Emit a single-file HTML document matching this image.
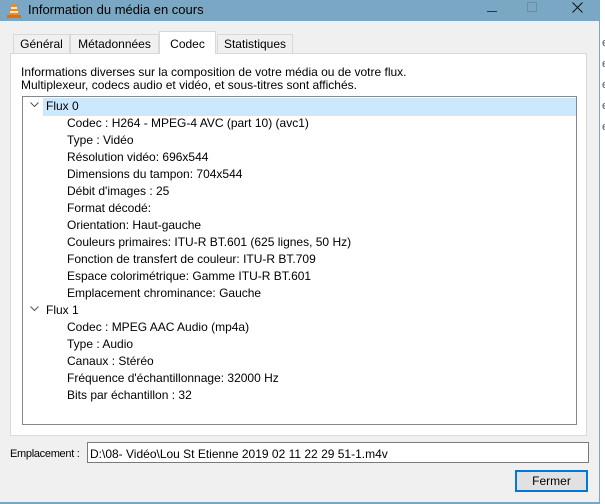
<!DOCTYPE html>
<html><head><meta charset="utf-8"><style>
*{margin:0;padding:0;box-sizing:border-box}
body{width:605px;height:504px;background:#fff;font-family:"Liberation Sans",sans-serif;font-size:12px;color:#000;position:relative;overflow:hidden}
.win{position:absolute;left:0;top:0;width:600px;height:504px;background:#f0f0f0;border-right:1px solid #7aa6c2;border-bottom:2px solid #7aa6c2}
.title{position:absolute;left:0;top:0;width:600px;height:21px;background:#7aa7c3}
.title span{position:absolute;left:28px;top:2px;font-size:13px;color:#000}
.ab{position:absolute;font-size:12px;white-space:nowrap}
.tab{position:absolute;top:34px;height:20px;border:1px solid #d9d9d9;border-bottom:none;background:#f0f0f0;text-align:center;line-height:18px}
.panel{position:absolute;left:10px;top:53px;width:577px;height:383px;background:#fff;border:1px solid #d9d9d9}
.tree{position:absolute;left:22px;top:96px;width:555px;height:329px;border:1px solid #828790;background:#fff}
.r{position:absolute;left:67px;white-space:nowrap}
.e{position:absolute;left:602px;color:#555;font-size:11px}
</style></head><body>
<div class="e" style="top:37px">e</div><div class="e" style="top:58px">e</div><div class="e" style="top:79px">e</div><div class="e" style="top:100px">e</div><div class="e" style="top:121px">e</div>
<div class="win">
<div class="title">
<svg style="position:absolute;left:6px;top:3px" width="16" height="15" viewBox="0 0 16 15"><path d="M6 1h4l3 11H3z" fill="#f08a1c"/><path d="M5 5h6M4 9h8" stroke="#fff" stroke-width="1.5"/><rect x="1" y="12" width="14" height="3" fill="#e06b10"/></svg>
<span>Information du média en cours</span>
<div class="ab" style="left:487px;top:11px;width:10px;height:1px;background:#333"></div>
<div class="ab" style="left:527px;top:2px;width:10px;height:10px;border:1px solid #6b8ea6"></div>
<svg style="position:absolute;left:572px;top:2px" width="11" height="11"><path d="M0.5 0.5L10.5 10.5M10.5 0.5L0.5 10.5" stroke="#111" stroke-width="1"/></svg>
</div>
<div class="tab" style="left:13px;width:57px">Général</div>
<div class="tab" style="left:70px;width:89px">Métadonnées</div>
<div class="tab" style="left:217px;width:76px">Statistiques</div>
<div class="panel"></div>
<div class="tab" style="left:159px;top:31px;width:57px;height:23px;background:#fff;line-height:24px;z-index:2">Codec</div>
<div class="ab" style="left:21px;top:65px">Informations diverses sur la composition de votre média ou de votre flux.</div>
<div class="ab" style="left:21px;top:78px">Multiplexeur, codecs audio et vidéo, et sous-titres sont affichés.</div>
<div class="tree">
<div style="position:absolute;left:20px;top:1px;width:533px;height:18px;background:#cce8ff"></div>
</div>
<svg style="position:absolute;left:30px;top:102px" width="9" height="6"><path d="M0.5 0.5L4.5 4.5L8.5 0.5" fill="none" stroke="#555"/></svg>
<svg style="position:absolute;left:30px;top:306px" width="9" height="6"><path d="M0.5 0.5L4.5 4.5L8.5 0.5" fill="none" stroke="#555"/></svg>
<div class="r" style="left:46px;top:99px">Flux 0</div>
<div class="r" style="top:116px">Codec : H264 - MPEG-4 AVC (part 10) (avc1)</div>
<div class="r" style="top:133px">Type : Vidéo</div>
<div class="r" style="top:150px">Résolution vidéo: 696x544</div>
<div class="r" style="top:167px">Dimensions du tampon: 704x544</div>
<div class="r" style="top:184px">Débit d'images : 25</div>
<div class="r" style="top:201px">Format décodé:</div>
<div class="r" style="top:218px">Orientation: Haut-gauche</div>
<div class="r" style="top:235px">Couleurs primaires: ITU-R BT.601 (625 lignes, 50 Hz)</div>
<div class="r" style="top:252px">Fonction de transfert de couleur: ITU-R BT.709</div>
<div class="r" style="top:269px">Espace colorimétrique: Gamme ITU-R BT.601</div>
<div class="r" style="top:286px">Emplacement chrominance: Gauche</div>
<div class="r" style="left:46px;top:303px">Flux 1</div>
<div class="r" style="top:320px">Codec : MPEG AAC Audio (mp4a)</div>
<div class="r" style="top:337px">Type : Audio</div>
<div class="r" style="top:354px">Canaux : Stéréo</div>
<div class="r" style="top:371px">Fréquence d'échantillonnage: 32000 Hz</div>
<div class="r" style="top:388px">Bits par échantillon : 32</div>
<div class="ab" style="left:10px;top:448px;font-size:11px;letter-spacing:-0.3px">Emplacement :</div>
<div class="ab" style="left:87px;top:442px;width:502px;height:21px;border:1px solid #7a7a7a;background:#fff;padding:4px 2px">D:\08- Vidéo\Lou St Etienne 2019 02 11 22 29 51-1.m4v</div>
<div class="ab" style="left:515px;top:470px;width:73px;height:22px;border:2px solid #0078d7;background:#e1e1e1;text-align:center;line-height:18px">Fermer</div>
</div>
</body></html>
